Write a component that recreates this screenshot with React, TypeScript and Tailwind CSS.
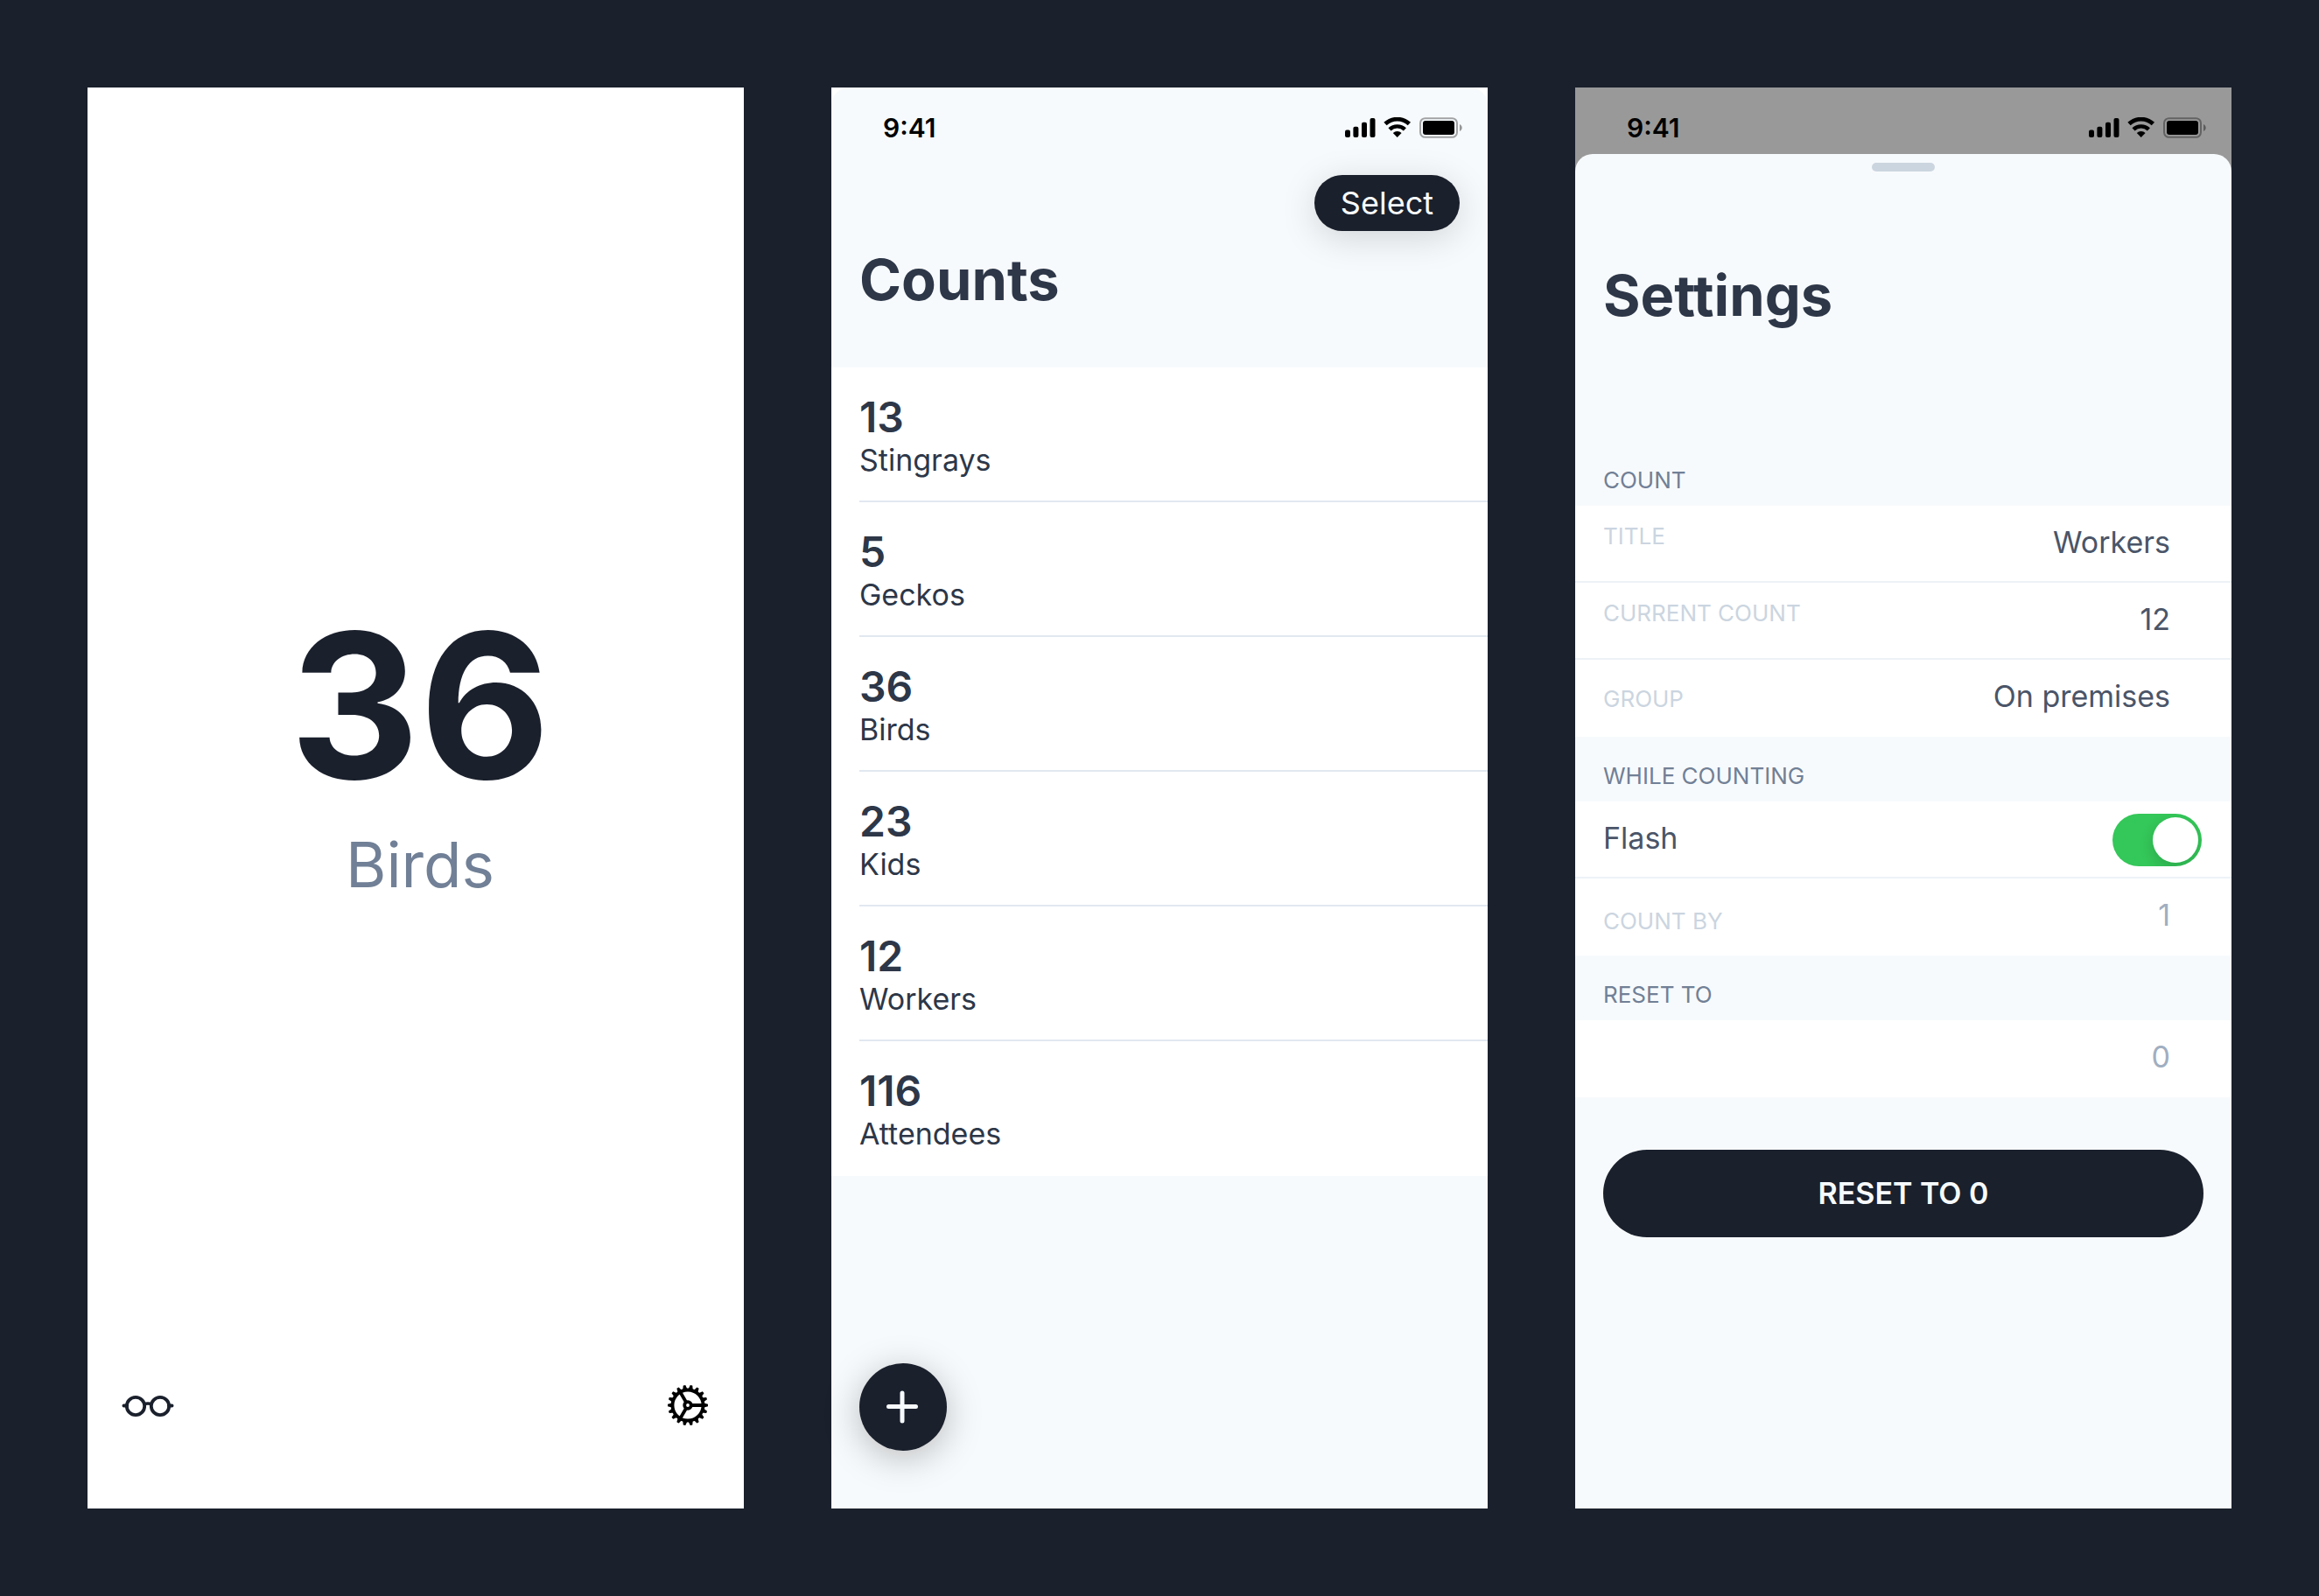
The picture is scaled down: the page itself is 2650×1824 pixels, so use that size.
import { useState, type ReactNode } from "react";

const counts = [
  { value: 13, name: "Stingrays" },
  { value: 5, name: "Geckos" },
  { value: 36, name: "Birds" },
  { value: 23, name: "Kids" },
  { value: 12, name: "Workers" },
  { value: 116, name: "Attendees" },
];

const toothAngles = Array.from({ length: 18 }, (_, i) => i * 20);

function GlassesIcon() {
  return (
    <svg width="62" height="48" viewBox="0 0 62 48" fill="none" stroke="#1a202c" aria-hidden="true">
      <circle cx="17" cy="25" r="10.2" strokeWidth="3.8" />
      <circle cx="45" cy="25" r="10.2" strokeWidth="3.8" />
      <path d="M26 23.2c3-1.4 7-1.4 10 0" strokeWidth="3.6" />
      <path d="M3.5 24.5h3.5M55 24.5h3.5" strokeWidth="4" strokeLinecap="round" />
    </svg>
  );
}

function GearIcon() {
  return (
    <svg width="48" height="48" viewBox="0 0 48 48" fill="none" stroke="#000" aria-hidden="true">
      {toothAngles.map((a) => (
        <path key={a} d="M41.5 21.2L47 22.7V25.3L41.5 26.8Z" fill="#000" stroke="none" transform={`rotate(${a} 24 24)`} />
      ))}
      <circle cx="24" cy="24" r="17.5" strokeWidth="3.8" />
      <circle cx="24" cy="24" r="3.8" strokeWidth="3.8" />
      <path d="M28 24h13M22 20.5l-6.5-11.3M22 27.5l-6.5 11.3" strokeWidth="3.8" />
    </svg>
  );
}

function StatusIcons() {
  return (
    <svg width="135" height="24" viewBox="0 0 135 24" fill="#000" aria-hidden="true">
      <rect x="1" y="14.5" width="6" height="8.5" rx="2" />
      <rect x="10.4" y="10.7" width="6" height="12.3" rx="2" />
      <rect x="20" y="5.8" width="6" height="17.2" rx="2" />
      <rect x="29.5" y="1" width="6" height="22" rx="2" />
      <path d="M47 7.6a20 20 0 0 1 27.4 0" fill="none" stroke="#000" strokeWidth="4.8" />
      <path d="M52 13.9a12.4 12.4 0 0 1 17.4 0" fill="none" stroke="#000" strokeWidth="4.4" />
      <path d="M60.7 23l-4.9-5a7 7 0 0 1 9.8 0z" />
      <rect x="87" y="1.2" width="42" height="21.6" rx="5.5" fill="none" stroke="#000" strokeOpacity="0.35" strokeWidth="2" />
      <path d="M132 8v8c3.6-1.6 3.6-6.4 0-8z" fillOpacity="0.4" />
      <rect x="90" y="4" width="36" height="16" rx="3" />
    </svg>
  );
}

function StatusBar() {
  return (
    <div className="flex h-[76px] items-center justify-between pt-4 pr-[29px] pl-[59px]">
      <span className="text-[30px] leading-10 font-semibold text-black">9:41</span>
      <StatusIcons />
    </div>
  );
}

function CounterScreen() {
  return (
    <section className="flex flex-col bg-white">
      <div className="flex flex-1 flex-col items-center justify-center pt-[38px] pl-[10px]">
        <p className="text-[230px] leading-[228px] font-bold text-[#1a202c]">36</p>
        <p className="mt-7 text-[71px] leading-[80px] text-[#718096]">Birds</p>
      </div>
      <div className="flex justify-between pr-10 pb-[94px] pl-[38px]">
        <button type="button" aria-label="View counts">
          <GlassesIcon />
        </button>
        <button type="button" aria-label="Settings">
          <GearIcon />
        </button>
      </div>
    </section>
  );
}

function CountsScreen() {
  return (
    <section className="flex flex-col bg-white">
      <div className="flex flex-1 flex-col rounded-t-[20px] bg-[#f7fafc]">
        <StatusBar />
        <div className="flex justify-end px-8 pt-6">
          <button
            type="button"
            className="h-16 rounded-full bg-[#1a202c] px-[30px] text-[36px] leading-10 text-[#f7fafc] shadow-[0_8px_40px_rgba(0,0,0,0.15)]"
          >
            Select
          </button>
        </div>
        <h1 className="px-8 pt-4 pb-[60px] text-[65px] leading-[80px] font-bold text-[#2d3748]">Counts</h1>
        <ul className="bg-white pl-8 text-[#2d3748]">
          {counts.map((c) => (
            <li key={c.name} className="h-[154px] border-b-2 border-[#e2e8f0] pt-[33px] last:border-transparent">
              <p className="text-[48px] leading-[48px] font-semibold">{c.value}</p>
              <p className="mt-[5px] text-[34px] leading-10">{c.name}</p>
            </li>
          ))}
        </ul>
        <button
          type="button"
          aria-label="Add count"
          className="mt-auto mb-[66px] ml-8 flex size-[100px] items-center justify-center rounded-full bg-[#1a202c] shadow-[0_8px_40px_rgba(0,0,0,0.25)]"
        >
          <svg width="38" height="38" viewBox="0 0 38 38" stroke="#f7fafc" strokeWidth="5" strokeLinecap="round" aria-hidden="true">
            <path d="M18 3v32M2.5 18.5h31" />
          </svg>
        </button>
      </div>
    </section>
  );
}

function SectionTitle({ children }: { children: ReactNode }) {
  return <h2 className="px-8 pt-[29px] pb-[13px] text-[26px] leading-8 text-[#718096]">{children}</h2>;
}

type FieldProps = {
  id: string;
  label: string;
  labelClass?: string;
  value?: string;
  placeholder?: string;
  divider?: boolean;
};

function Field({ id, label, labelClass = "", value, placeholder, divider }: FieldProps) {
  return (
    <div className={`flex h-[88px] items-start pr-[70px] pl-8 ${divider ? "border-b-2 border-[#edf2f7]" : ""}`}>
      {label && (
        <label htmlFor={id} className={`shrink-0 text-[26px] leading-8 text-[#cbd5e0] ${labelClass}`}>
          {label}
        </label>
      )}
      <input
        id={id}
        defaultValue={value}
        placeholder={placeholder}
        className="mt-[22px] h-10 min-w-0 flex-1 bg-transparent text-right text-[34px] leading-10 text-[#4a5568] outline-none placeholder:text-[#a0aec0]"
      />
    </div>
  );
}

function SettingsScreen() {
  const [flash, setFlash] = useState(true);
  return (
    <section className="flex flex-col bg-[#999999]">
      <StatusBar />
      <div className="flex flex-1 flex-col rounded-t-[20px] bg-[#f7fafc]">
        <div className="mt-[10px] h-[10px] w-[72px] self-center rounded-full bg-[#cbd5e0]" />
        <h1 className="px-8 pt-[102px] pb-[126px] text-[65px] leading-[80px] font-bold text-[#2d3748]">Settings</h1>

        <SectionTitle>COUNT</SectionTitle>
        <div className="bg-white">
          <Field id="title" label="TITLE" labelClass="pt-[19px]" value="Workers" divider />
          <Field id="current" label="CURRENT COUNT" labelClass="pt-[19px]" value="12" divider />
          <Field id="group" label="GROUP" labelClass="pt-[29px]" value="On premises" />
        </div>

        <SectionTitle>WHILE COUNTING</SectionTitle>
        <div className="bg-white">
          <div className="flex h-[88px] items-start justify-between border-b-2 border-[#edf2f7] pr-[34px] pl-8">
            <label htmlFor="flash" className="pt-[22px] text-[34px] leading-10 text-[#4a5568]">
              Flash
            </label>
            <input
              id="flash"
              type="checkbox"
              role="switch"
              checked={flash}
              onChange={(e) => setFlash(e.target.checked)}
              className="mt-[14px] flex h-[60px] w-[102px] appearance-none overflow-hidden rounded-full bg-[#cbd5e0] p-1 before:size-[52px] before:rounded-full before:bg-white before:shadow-[0_6px_16px_rgba(0,0,0,0.15)] before:content-[''] checked:justify-end checked:bg-[#34c759]"
            />
          </div>
          <Field id="step" label="COUNT BY" labelClass="pt-[33px]" placeholder="1" />
        </div>

        <SectionTitle>
          <label htmlFor="reset">RESET TO</label>
        </SectionTitle>
        <div className="bg-white">
          <Field id="reset" label="" placeholder="0" />
        </div>

        <button
          type="button"
          className="mx-8 mt-[60px] h-[100px] rounded-full bg-[#1a202c] text-[34px] leading-10 font-semibold text-[#f7fafc]"
        >
          RESET TO 0
        </button>
      </div>
    </section>
  );
}

export default function App() {
  return (
    <main className="grid min-h-screen grid-cols-3 gap-[100px] bg-[#1a202c] p-[100px] font-['Inter',sans-serif]">
      <CounterScreen />
      <CountsScreen />
      <SettingsScreen />
    </main>
  );
}
